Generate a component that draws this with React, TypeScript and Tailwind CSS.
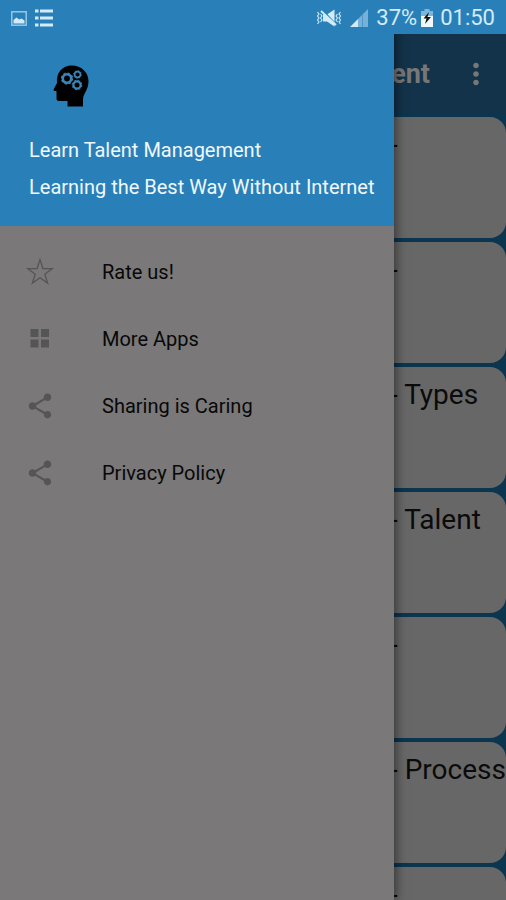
import React from 'react';
import { MdShare, MdMoreVert } from 'react-icons/md';

const StarIcon = () => (
    <svg viewBox="0 0 32 32" className="h-8 w-8 fill-none stroke-current" strokeWidth="1.3">
        <path d="M16 3.600l2.900 8.900 9.400.1-7.500 5.600 2.800 8.900-7.600-5.400-7.600 5.400 2.800-8.900-7.500-5.600 9.400-.1z" />
    </svg>
);

const GridIcon = () => (
    <svg viewBox="0 0 32 32" className="h-8 w-8 fill-current">
        <path d="M6.500 6h8v8h-8zM17 6h8v8h-8zM6.500 16.500h8v8h-8zM17 16.500h8v8h-8z" />
    </svg>
);

const HeadIcon = () => (
    <svg viewBox="0 0 36 42" className="h-[42px] w-9" aria-hidden="true">
        <path
            d="M19 .5C28 .5 35.500 7 35.500 16c0 5-1.500 8-3 11-1.500 2.500-2.500 5-2.500 8v6.500H14.500V36H6c-2 0-2.500-1-2.500-3v-7H1.800c-1 0-1.500-1-1-2L4 18C3 8 9 .5 19 .5z"
            fill="#000"
        />
        <g fill="none" stroke="#3a86b8">
            <circle cx="14" cy="13.500" r="4.200" strokeWidth="2.600" />
            <circle cx="14" cy="13.500" r="5.600" strokeWidth="1.100" strokeDasharray="2.200 2.200" />
            <circle cx="24.500" cy="9.500" r="2.900" strokeWidth="1.600" />
            <circle cx="24.500" cy="9.500" r="3.900" strokeWidth=".8" strokeDasharray="1.500 1.500" />
            <circle cx="24" cy="20" r="3.600" strokeWidth="2.200" />
            <circle cx="24" cy="20" r="4.800" strokeWidth="1" strokeDasharray="1.900 1.900" />
        </g>
    </svg>
);

const StatusBar = () => (
    <div className="relative z-20 flex h-[34px] items-center bg-[#2980b9] px-[11px] pt-[2px] text-[#d3ebf9]">
        <svg viewBox="0 0 16 15" className="h-[15px] w-4">
            <rect x=".8" y=".8" width="14.400" height="13.400" fill="none" stroke="#9ccbe8" strokeWidth="1.400" />
            <path d="M2.500 12.500V9l3-2.500 2.500 2 2.500-1 3 2v3z" fill="currentColor" />
        </svg>
        <svg viewBox="0 0 18 18" className="ml-2 h-[18px] w-[18px] fill-current">
            <path d="M0 .5h3.500v3H0zM5 .5h13v3H5zM0 7.500h3.500v3H0zM5 7.500h13v3H5zM0 14.500h3.500v3H0zM5 14.500h13v3H5z" />
        </svg>
        <div className="ml-auto flex items-center">
            <svg viewBox="0 0 26 18" className="h-[18px] w-[26px]">
                <path d="M7 5.500h4L18.500.5v17L11 12.500H7z" fill="currentColor" />
                <path d="M6.500 1l14 15" stroke="#2980b9" strokeWidth="1.600" />
                <path d="M5 2l15 14" stroke="currentColor" strokeWidth="1.800" />
                <path
                    d="M1.500 3l1.500 2-1.500 2L3 9l-1.500 2L3 13l-1.500 2M4.500 5L6 7 4.500 9 6 11l-1.500 2M24.500 3L23 5l1.500 2L23 9l1.500 2-1.500 2 1.500 2M21.500 5L20 7l1.500 2L20 11l1.500 2"
                    fill="none"
                    stroke="currentColor"
                    strokeWidth="1.100"
                />
            </svg>
            <svg viewBox="0 0 18 18" className="ml-2 h-[18px] w-[18px]">
                <path d="M0 18l8-8v8z" fill="currentColor" />
                <path d="M8 18v-8l4-4v12zM12.500 18V5.500L18 0v18z" fill="#77b1d8" />
            </svg>
            <span className="ml-2 text-[22px] leading-none">37%</span>
            <svg viewBox="0 0 12 18" className="ml-1 h-[18px] w-3">
                <path d="M3.500 0h5v2H12v16H0V2h3.500z" fill="#7fb5d8" />
                <path d="M0 7h12v11H0z" fill="#eef8fd" />
                <path d="M8 3L2.500 9.500h3L4 15l6-7H6.500z" fill="#111" />
            </svg>
            <span className="ml-[7px] text-[22px] leading-none">01:50</span>
        </div>
    </div>
);

const topics = ['-', '-', '- Types', '- Talent', '-', '- Process', '-'];

const menuItems = [
    { label: 'Rate us!', icon: <StarIcon /> },
    { label: 'More Apps', icon: <GridIcon /> },
    { label: 'Sharing is Caring', icon: <MdShare className="h-[30px] w-[30px]" /> },
    { label: 'Privacy Policy', icon: <MdShare className="h-[30px] w-[30px]" /> },
];

const TopicList = () => (
    <main>
        <header className="flex h-20 items-center justify-end bg-[#12334a] pr-3 text-[#777777]">
            <h1 className="text-[27px] font-bold">ent</h1>
            <button aria-label="More options" className="ml-7 flex h-9 w-9 items-center justify-center">
                <MdMoreVert className="h-[34px] w-[34px]" />
            </button>
        </header>
        <ul className="flex flex-col gap-1 pt-[3px]">
            {topics.map((topic, index) => (
                <li key={index} className="h-[121px] rounded-[16px] bg-[#676767] pt-[10px] text-[#0b0b0b]">
                    <p className="ml-auto w-[116px] text-[28px] leading-9 whitespace-nowrap">{topic}</p>
                </li>
            ))}
        </ul>
    </main>
);

const Drawer = () => (
    <aside className="absolute inset-y-0 right-[112px] left-0 z-10 bg-[#7a7878] shadow-[2px_0_10px_rgba(0,0,0,0.5)]">
        <div className="h-[226px] bg-[#2980b9] pt-[65px] pl-[29px] text-[#f0f8fd]">
            <div className="pl-6">
                <HeadIcon />
            </div>
            <p className="mt-[25px] text-[20px] leading-[37px] whitespace-nowrap">Learn Talent Management</p>
            <p className="text-[20px] leading-[37px] whitespace-nowrap">Learning the Best Way Without Internet</p>
        </div>
        <nav className="pt-3">
            {menuItems.map((item) => (
                <a key={item.label} href="#" className="flex h-[67px] items-center pl-6">
                    <span className="flex w-8 justify-center text-[#565555]">{item.icon}</span>
                    <span className="ml-[46px] text-[20px] text-[#080808]">{item.label}</span>
                </a>
            ))}
        </nav>
    </aside>
);

const App: React.FC = () => {
    return (
        <div className="relative h-screen overflow-hidden bg-[#0c3550] font-['Roboto',sans-serif]">
            <StatusBar />
            <TopicList />
            <Drawer />
        </div>
    );
};

export default App;
